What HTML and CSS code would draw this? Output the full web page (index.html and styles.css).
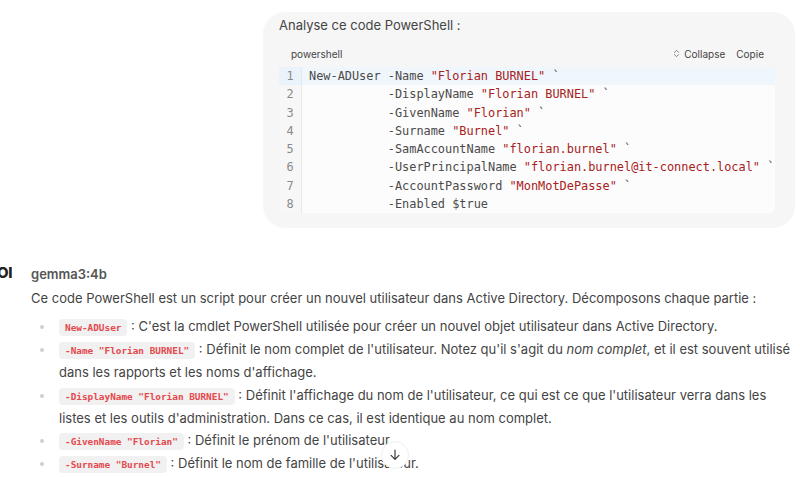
FILE: index.html
```html
<!DOCTYPE html>
<html lang="fr">
<head>
<meta charset="utf-8">
<title>Chat</title>
<link rel="stylesheet" href="styles.css">
</head>
<body>
<div class="page">
  <div class="user-row">
    <div class="bubble">
      <div class="prompt">Analyse ce code PowerShell :</div>
      <div class="codeblock">
        <div class="code-head">
          <span class="lang">powershell</span>
          <div class="actions">
            <span class="action"><svg class="chev" viewBox="0 0 10 12" width="7" height="9"><path d="M2 4.5 L5 1.5 L8 4.5 M2 7.5 L5 10.5 L8 7.5" fill="none" stroke="#777" stroke-width="1.3" stroke-linecap="round" stroke-linejoin="round"/></svg>Collapse</span>
            <span class="action">Copie</span>
          </div>
        </div>
        <div class="code-body">
          <div class="line active"><span class="ln">1</span><span class="src">New-ADUser -Name <span class="str">"Florian BURNEL"</span> `</span></div>
          <div class="line"><span class="ln">2</span><span class="src">           -DisplayName <span class="str">"Florian BURNEL"</span> `</span></div>
          <div class="line"><span class="ln">3</span><span class="src">           -GivenName <span class="str">"Florian"</span> `</span></div>
          <div class="line"><span class="ln">4</span><span class="src">           -Surname <span class="str">"Burnel"</span> `</span></div>
          <div class="line"><span class="ln">5</span><span class="src">           -SamAccountName <span class="str">"florian.burnel"</span> `</span></div>
          <div class="line"><span class="ln">6</span><span class="src">           -UserPrincipalName <span class="str">"florian.burnel@it-connect.local"</span> `</span></div>
          <div class="line"><span class="ln">7</span><span class="src">           -AccountPassword <span class="str">"MonMotDePasse"</span> `</span></div>
          <div class="line"><span class="ln">8</span><span class="src">           -Enabled $true</span></div>
        </div>
      </div>
    </div>
  </div>

  <div class="assistant">
    <div class="avatar"><span>OI</span></div>
    <div class="content">
      <div class="model">gemma3:4b</div>
      <p class="intro">Ce code PowerShell est un script pour créer un nouvel utilisateur dans Active Directory. Décomposons chaque partie :</p>
      <ul class="list">
        <li><code>New-ADUser</code> : C'est la cmdlet PowerShell utilisée pour créer un nouvel objet utilisateur dans Active Directory.</li>
        <li><code>-Name "Florian BURNEL"</code> : Définit le nom complet de l'utilisateur. Notez qu'il s'agit du <em>nom complet</em>, et il est souvent utilisé dans les rapports et les noms d'affichage.</li>
        <li><code>-DisplayName "Florian BURNEL"</code> : Définit l'affichage du nom de l'utilisateur, ce qui est ce que l'utilisateur verra dans les listes et les outils d'administration. Dans ce cas, il est identique au nom complet.</li>
        <li><code>-GivenName "Florian"</code> : Définit le prénom de l'utilisateur</li>
        <li><code>-Surname "Burnel"</code> : Définit le nom de famille de l'utilisateur.</li>
      </ul>
    </div>
  </div>

  <button class="scroll-down" aria-label="Défiler vers le bas"><svg viewBox="0 0 16 16" width="14" height="14"><path d="M8 2.5 V13 M3.5 8.5 L8 13 L12.5 8.5" fill="none" stroke="#333" stroke-width="1.3" stroke-linecap="round" stroke-linejoin="round"/></svg></button>
</div>
</body>
</html>
```

FILE: styles.css
```css
* { box-sizing: border-box; }
html, body { margin: 0; padding: 0; background: #fff; }
body {
  font-family: Inter, "Noto Sans", "Liberation Sans", sans-serif;
  color: #3f3f3f;
  width: 800px;
  height: 478px;
  overflow: hidden;
}
.page { position: relative; width: 800px; height: 478px; }

.user-row {
  display: flex;
  justify-content: flex-end;
  padding: 12px 5px 0 0;
}
.bubble {
  width: 532px;
  background: #f6f6f6;
  border-radius: 22px;
  padding: 4px 20px 15px 16px;
}
.prompt {
  font-size: 13px;
  line-height: 18px;
  color: #444;
}
.codeblock {
  margin-top: 6px;
  background: #fcfcfc;
  border-radius: 6px;
}
.code-head {
  display: flex;
  justify-content: space-between;
  align-items: center;
  height: 27px;
  padding: 0 11px 0 12px;
  background: #f6f6f6;
  font-size: 10px;
  color: #444;
}
.actions { display: flex; gap: 11px; align-items: center; }
.action { display: flex; align-items: center; gap: 4px; }
.chev { display: block; }
.code-body {
  font-family: "DejaVu Sans Mono", "Liberation Mono", monospace;
  font-size: 11.9px;
  line-height: 18.3px;
  color: #4a4a4a;
}
.line { display: flex; white-space: pre; }
.line.active { background: #eff6fc; }
.ln {
  width: 23px;
  flex: none;
  text-align: center;
  color: #8a8a8a;
  border-right: 1px solid #e8e8e8;
  background: #f7f7f7;
}
.line.active .ln { background: #eaf2fb; }
.src { padding-left: 7px; }
.str { color: #a82020; }

.assistant {
  display: flex;
  margin-top: 37px;
}
.avatar {
  width: 12px;
  flex: none;
  overflow: hidden;
  display: flex;
  justify-content: flex-end;
  font-weight: 800;
  font-size: 15px;
  line-height: 20px;
  color: #222;
  margin-top: -2px;
  letter-spacing: -0.5px;
}
.content { padding-left: 19px; padding-right: 6px; }
.model {
  font-size: 13px;
  font-weight: 600;
  color: #555;
  line-height: 18px;
}
.intro {
  margin: 4px 0 0;
  font-size: 13px;
  line-height: 22px;
  color: #444;
}
.list {
  margin: 6px 0 0;
  padding: 0 0 0 28px;
  list-style: none;
  font-size: 13px;
  line-height: 22.8px;
  color: #444;
}
.list li { position: relative; }
.list li::before {
  content: "";
  position: absolute;
  left: -19px;
  top: 10px;
  width: 4px;
  height: 4px;
  border-radius: 50%;
  background: #cfcfcf;
}
code {
  font-family: "DejaVu Sans Mono", "Liberation Mono", monospace;
  font-size: 9.4px;
  line-height: 1;
  font-weight: 700;
  color: #e5484d;
  background: #f1f1f1;
  border-radius: 4px;
  padding: 3px 6px;
}
em { font-style: italic; }

.scroll-down {
  position: absolute;
  left: 381px;
  top: 441px;
  width: 28px;
  height: 28px;
  border-radius: 50%;
  border: 1px solid #f0f0f0;
  background: #fff;
  display: flex;
  align-items: center;
  justify-content: center;
  padding: 0;
}
```
